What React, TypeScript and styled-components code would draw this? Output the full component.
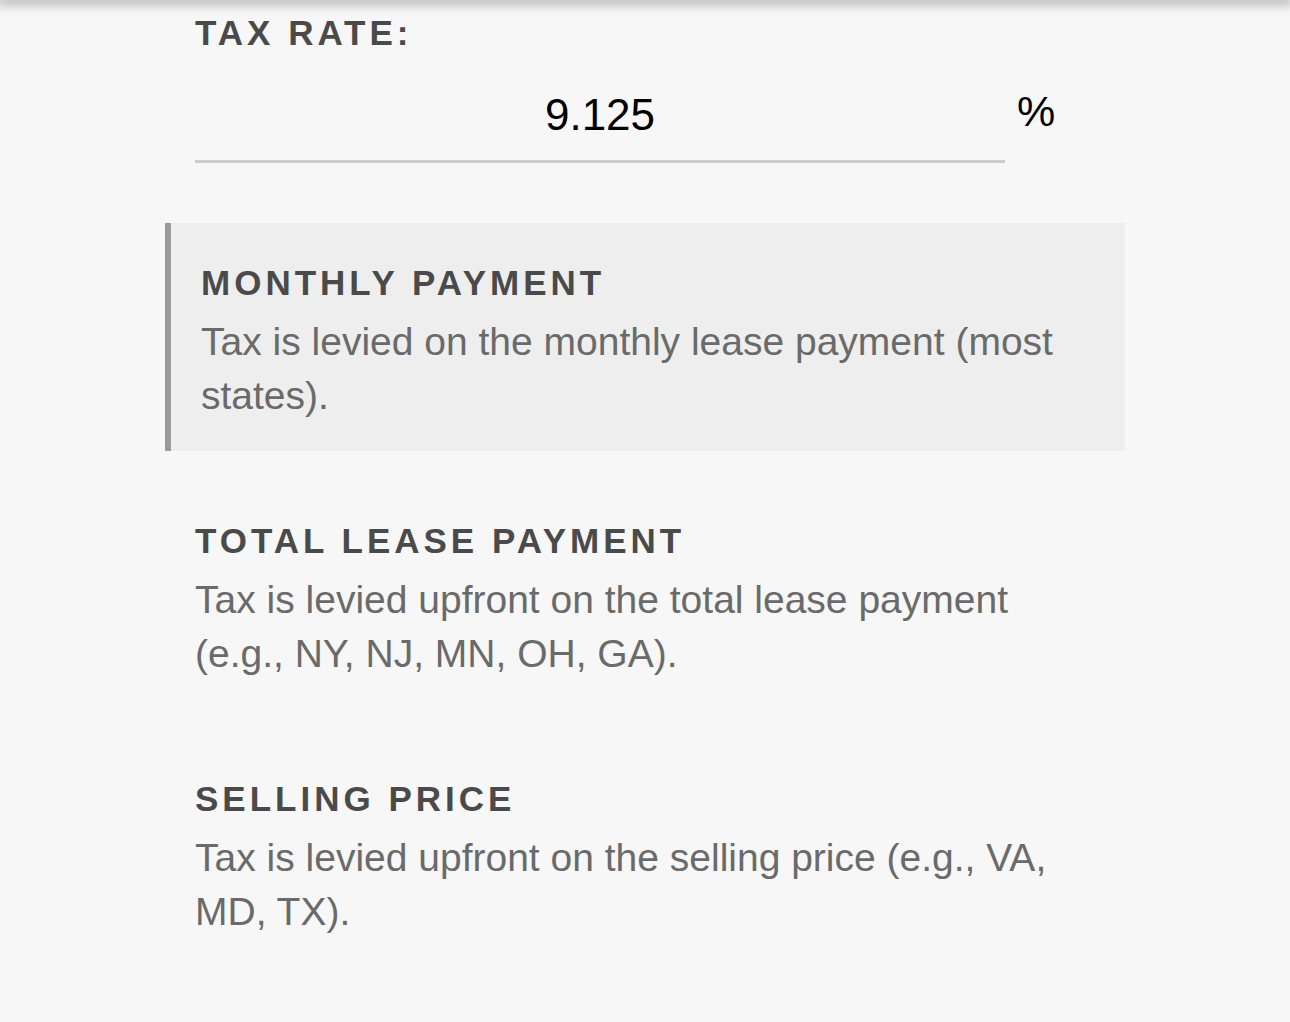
import React from "react";
import styled, { createGlobalStyle } from "styled-components";

const GlobalStyle = createGlobalStyle`
  html, body {
    margin: 0;
    padding: 0;
    background: #f7f7f7;
  }
  body {
    font-family: "Liberation Sans", Arial, sans-serif;
    overflow: hidden;
  }
`;

interface ITaxOption {
  id: string;
  title: string;
  description: string;
}

const options: ITaxOption[] = [
  {
    id: "monthly",
    title: "Monthly Payment",
    description: "Tax is levied on the monthly lease payment (most states).",
  },
  {
    id: "total",
    title: "Total Lease Payment",
    description:
      "Tax is levied upfront on the total lease payment (e.g., NY, NJ, MN, OH, GA).",
  },
  {
    id: "selling",
    title: "Selling Price",
    description: "Tax is levied upfront on the selling price (e.g., VA, MD, TX).",
  },
];

export default function App() {
  const [rate, setRate] = React.useState("9.125");
  const [selected, setSelected] = React.useState("monthly");

  return (
    <React.Fragment>
      <GlobalStyle />
      <Page>
        <HeaderShade />
        <Content>
          <Label>Tax rate:</Label>
          <RateRow>
            <RateInput
              value={rate}
              onChange={(e) => setRate(e.target.value)}
              inputMode="decimal"
            />
            <Unit>%</Unit>
          </RateRow>
          <Options>
            {options.map((opt) => (
              <Option
                key={opt.id}
                $active={opt.id === selected}
                onClick={() => setSelected(opt.id)}
              >
                <OptionTitle>{opt.title}</OptionTitle>
                <OptionText>{opt.description}</OptionText>
              </Option>
            ))}
          </Options>
        </Content>
      </Page>
    </React.Fragment>
  );
}

const Page = styled.div`
  min-height: 1022px;
  background: #f7f7f7;
  overflow: hidden;
`;

const HeaderShade = styled.div`
  height: 0;
  box-shadow: 0 0 12px 3px rgba(0, 0, 0, 0.45);
`;

const Content = styled.div`
  width: 900px;
  padding: 12px 0 0 195px;
`;

const Label = styled.div`
  font-family: "Liberation Sans", Arial, sans-serif;
  font-weight: 700;
  font-size: 35px;
  line-height: 42px;
  letter-spacing: 4px;
  text-transform: uppercase;
  color: #4a4a4a;
`;

const RateRow = styled.div`
  display: flex;
  margin-top: 16px;
`;

const RateInput = styled.input`
  width: 810px;
  height: 90px;
  box-sizing: content-box;
  padding: 0;
  border: none;
  border-bottom: 3px solid #cccccc;
  background: transparent;
  outline: none;
  text-align: center;
  font-family: "Liberation Sans", Arial, sans-serif;
  font-size: 44px;
  color: #000;
`;

const Unit = styled.span`
  margin-left: 12px;
  line-height: 82px;
  font-size: 43px;
  color: #000;
`;

const Options = styled.div`
  display: flex;
  flex-direction: column;
  gap: 30px;
  margin: 60px -30px 0;
`;

const Option = styled.div<{ $active: boolean }>`
  height: 228px;
  box-sizing: border-box;
  padding: 39px 30px 0;
  cursor: pointer;
  background: ${(p) => (p.$active ? "#eeeeee" : "transparent")};
  border-left: ${(p) => (p.$active ? "6px solid #9a9a9a" : "none")};
`;

const OptionTitle = styled.div`
  font-weight: 700;
  font-size: 35px;
  line-height: 42px;
  letter-spacing: 4px;
  text-transform: uppercase;
  color: #4a4a4a;
`;

const OptionText = styled.p`
  margin: 11px 0 0;
  font-size: 39px;
  line-height: 54px;
  color: #6a6a6a;
`;
